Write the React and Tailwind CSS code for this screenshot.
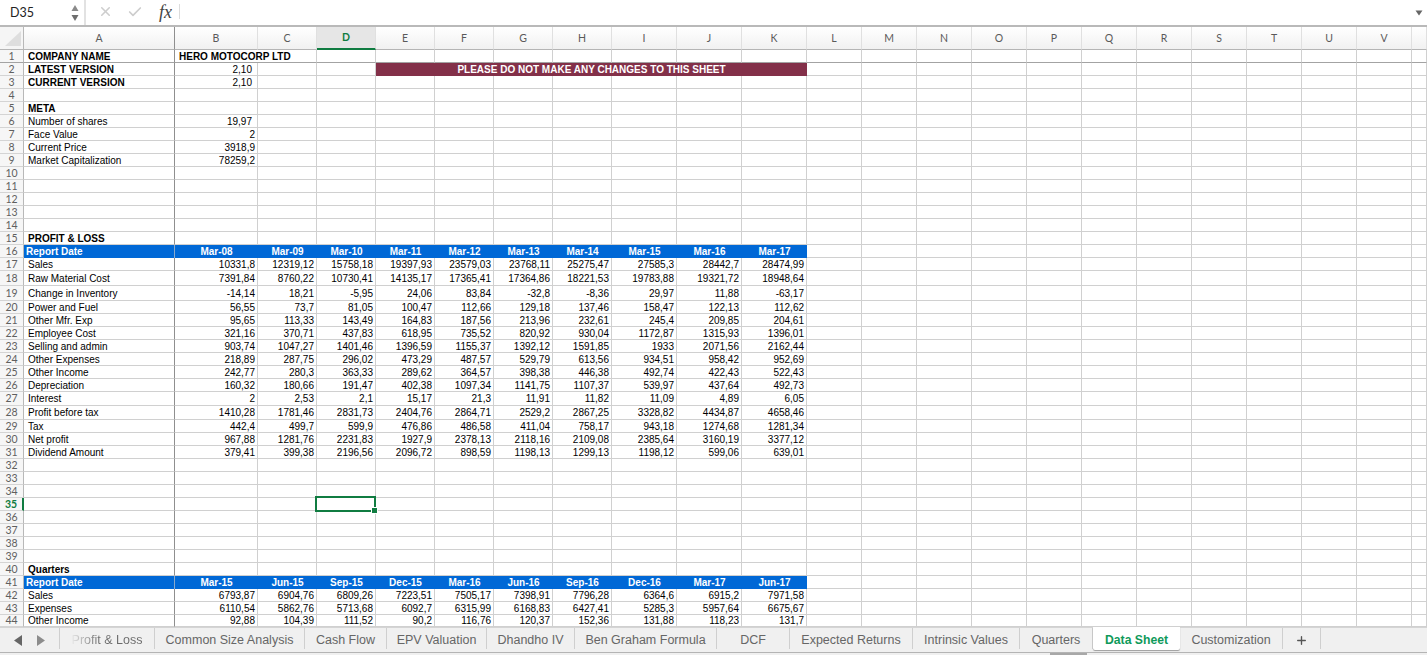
import React from "react";
import { X, Check, Plus } from "lucide-react";

const COLS =
  "grid grid-cols-[24px_151px_83px_59px_59px_59px_59px_59px_59px_65px_65px_65px_55px_55px_55px_55px_55px_55px_55px_55px_55px_55px_55px_15px]";

const LETTERS = ["A", "B", "C", "D", "E", "F", "G", "H", "I", "J", "K", "L", "M", "N", "O", "P", "Q", "R", "S", "T", "U", "V", ""];

const HEIGHTS = {
  18: "h-[15px]",
  19: "h-[15px]",
  27: "h-[14px]",
  28: "h-[14px]",
  44: "h-[12px]",
};

const TOTAL_ROWS = 44;

const FY = ["Mar-08", "Mar-09", "Mar-10", "Mar-11", "Mar-12", "Mar-13", "Mar-14", "Mar-15", "Mar-16", "Mar-17"];
const QTR = ["Mar-15", "Jun-15", "Sep-15", "Dec-15", "Mar-16", "Jun-16", "Sep-16", "Dec-16", "Mar-17", "Jun-17"];

const DATA = {
  17: ["Sales", "10331,8", "12319,12", "15758,18", "19397,93", "23579,03", "23768,11", "25275,47", "27585,3", "28442,7", "28474,99"],
  18: ["Raw Material Cost", "7391,84", "8760,22", "10730,41", "14135,17", "17365,41", "17364,86", "18221,53", "19783,88", "19321,72", "18948,64"],
  19: ["Change in Inventory", "-14,14", "18,21", "-5,95", "24,06", "83,84", "-32,8", "-8,36", "29,97", "11,88", "-63,17"],
  20: ["Power and Fuel", "56,55", "73,7", "81,05", "100,47", "112,66", "129,18", "137,46", "158,47", "122,13", "112,62"],
  21: ["Other Mfr. Exp", "95,65", "113,33", "143,49", "164,83", "187,56", "213,96", "232,61", "245,4", "209,85", "204,61"],
  22: ["Employee Cost", "321,16", "370,71", "437,83", "618,95", "735,52", "820,92", "930,04", "1172,87", "1315,93", "1396,01"],
  23: ["Selling and admin", "903,74", "1047,27", "1401,46", "1396,59", "1155,37", "1392,12", "1591,85", "1933", "2071,56", "2162,44"],
  24: ["Other Expenses", "218,89", "287,75", "296,02", "473,29", "487,57", "529,79", "613,56", "934,51", "958,42", "952,69"],
  25: ["Other Income", "242,77", "280,3", "363,33", "289,62", "364,57", "398,38", "446,38", "492,74", "422,43", "522,43"],
  26: ["Depreciation", "160,32", "180,66", "191,47", "402,38", "1097,34", "1141,75", "1107,37", "539,97", "437,64", "492,73"],
  27: ["Interest", "2", "2,53", "2,1", "15,17", "21,3", "11,91", "11,82", "11,09", "4,89", "6,05"],
  28: ["Profit before tax", "1410,28", "1781,46", "2831,73", "2404,76", "2864,71", "2529,2", "2867,25", "3328,82", "4434,87", "4658,46"],
  29: ["Tax", "442,4", "499,7", "599,9", "476,86", "486,58", "411,04", "758,17", "943,18", "1274,68", "1281,34"],
  30: ["Net profit", "967,88", "1281,76", "2231,83", "1927,9", "2378,13", "2118,16", "2109,08", "2385,64", "3160,19", "3377,12"],
  31: ["Dividend Amount", "379,41", "399,38", "2196,56", "2096,72", "898,59", "1198,13", "1299,13", "1198,12", "599,06", "639,01"],
  42: ["Sales", "6793,87", "6904,76", "6809,26", "7223,51", "7505,17", "7398,91", "7796,28", "6364,6", "6915,2", "7971,58"],
  43: ["Expenses", "6110,54", "5862,76", "5713,68", "6092,7", "6315,99", "6168,83", "6427,41", "5285,3", "5957,64", "6675,67"],
  44: ["Other Income", "92,88", "104,39", "111,52", "90,2", "116,76", "120,37", "152,36", "131,88", "118,23", "131,7"],
  6: ["Number of shares", "19,97"],
  7: ["Face Value", "2"],
  8: ["Current Price", "3918,9"],
  9: ["Market Capitalization", "78259,2"],
};

const BOLD_LABELS = {
  1: "COMPANY NAME",
  2: "LATEST VERSION",
  3: "CURRENT VERSION",
  5: "META",
  15: "PROFIT & LOSS",
  40: "Quarters",
};

const TABS = [
  ["Common Size Analysis", "w-[150px]"],
  ["Cash Flow", "w-[82px]"],
  ["EPV Valuation", "w-[100px]"],
  ["Dhandho IV", "w-[88px]"],
  ["Ben Graham Formula", "w-[142px]"],
  ["DCF", "w-[73px]"],
  ["Expected Returns", "w-[123px]"],
  ["Intrinsic Values", "w-[107px]"],
  ["Quarters", "w-[73px]"],
];

function RowNum({ n }) {
  const active = n === 35;
  return (
    <div
      className={`flex items-center justify-center bg-[#f6f6f6] text-[10.5px] font-['Lato',sans-serif] border-b ${
        n === 1 ? "border-b-[#a3a3a3]" : "border-b-[#d4d4d4]"
      } ${
        active
          ? "font-bold text-[#107c41] border-r-2 border-r-[#107c41]"
          : "text-[#5f5f5f] border-r border-r-[#b8b8b8]"
      }`}
    >
      {n}
    </div>
  );
}

function Cell({ n, col, children, align, noRight }) {
  const bottom = n === 1 ? "border-b-[#a3a3a3]" : "border-b-[#d0d0d0]";
  const right = noRight ? "" : col === 0 ? "border-r border-r-[#8f8f8f]" : "border-r border-r-[#d0d0d0]";
  return (
    <div
      className={`relative flex items-center whitespace-nowrap border-b pt-px ${bottom} ${right} ${
        align === "right" ? "justify-end pr-[2px]" : "pl-[4px]"
      }`}
    >
      {children}
    </div>
  );
}

function BlueRow({ n, labels }) {
  return (
    <>
      <div className="-mt-px flex items-center bg-[#0068d6] pl-[2px] pt-px font-bold text-white border-r border-r-[#8aa9cc]">Report Date</div>
      {labels.map((l) => (
        <div key={l} className="-mt-px flex items-center justify-center bg-[#0068d6] pt-px font-bold text-white">
          {l}
        </div>
      ))}
      {Array.from({ length: 12 }).map((_, i) => (
        <Cell key={i} n={n} col={i + 11} />
      ))}
    </>
  );
}

function SheetRow({ n }) {
  const height = HEIGHTS[n] || "h-[13px]";
  let cells;

  if (n === 16 || n === 41) {
    cells = <BlueRow n={n} labels={n === 16 ? FY : QTR} />;
  } else if (n === 2) {
    cells = (
      <>
        <Cell n={n} col={0}><span className="font-bold">LATEST VERSION</span></Cell>
        <Cell n={n} col={1} align="right"><span className="pr-[3px]">2,10</span></Cell>
        <Cell n={n} col={2} />
        <Cell n={n} col={3} />
        <div className="col-span-7 -mt-px flex items-center justify-center bg-[#833049] pt-px text-white font-bold">
          PLEASE DO NOT MAKE ANY CHANGES TO THIS SHEET
        </div>
        {Array.from({ length: 12 }).map((_, i) => (
          <Cell key={i} n={n} col={i + 11} />
        ))}
      </>
    );
  } else {
    const row = DATA[n] || [];
    cells = LETTERS.map((_, i) => {
      if (i === 0) {
        return (
          <Cell key={i} n={n} col={0}>
            {BOLD_LABELS[n] ? <span className="font-bold">{BOLD_LABELS[n]}</span> : row[0]}
          </Cell>
        );
      }
      if (n === 1 && i === 1) {
        return (
          <Cell key={i} n={n} col={1} noRight>
            <span className="font-bold">HERO MOTOCORP LTD</span>
          </Cell>
        );
      }
      if ((n === 3 || n === 6) && i === 1) {
        return (
          <Cell key={i} n={n} col={1} align="right">
            <span className="pr-[3px]">{n === 3 ? "2,10" : row[1]}</span>
          </Cell>
        );
      }
      return (
        <Cell key={i} n={n} col={i} align={row[i] ? "right" : undefined}>
          {row[i]}
          {n === 35 && i === 3 && (
            <div className="absolute left-[-2px] right-[-1px] top-[-2px] bottom-[-2px] z-10 border-2 border-[#107c41]">
              <div className="absolute right-[-4px] bottom-[-4px] h-[7px] w-[7px] border border-white bg-[#107c41]" />
            </div>
          )}
        </Cell>
      );
    });
  }

  return (
    <div className={`${COLS} ${height}`}>
      <RowNum n={n} />
      {cells}
    </div>
  );
}

function FormulaBar() {
  return (
    <div className="flex h-[27px] items-stretch border-b-2 border-b-[#b9b9b9] bg-white">
      <div className="flex w-[86px] items-center justify-between border-r-2 border-r-[#e2e2e2] pl-[10px] pr-[4px]">
        <span className="pt-[2px] font-['Lato',sans-serif] text-[12.5px] text-[#222]">D35</span>
        <svg width="8" height="18" viewBox="0 0 8 18" className="mr-[1px]">
          <path d="M4 1 L7.5 7 L0.5 7 Z" fill="#8a8a8a" />
          <path d="M4 17 L7.5 11 L0.5 11 Z" fill="#6e6e6e" />
        </svg>
      </div>
      <div className="flex items-center pb-[2px]">
        <X size={15} strokeWidth={2.5} color="#cdcdcd" className="ml-[12px]" />
        <Check size={16} strokeWidth={2.5} color="#cdcdcd" className="ml-[14px]" />
        <span className="ml-[16px] font-['Liberation_Serif',serif] text-[18px] italic text-[#444]">fx</span>
        <div className="ml-[7px] h-[15px] w-px bg-[#dcdcdc]" />
      </div>
      <div className="ml-auto flex items-center pr-[3px]">
        <svg width="8" height="6" viewBox="0 0 8 6" className="mr-[1px]">
          <path d="M0.5 0.5 L7.5 0.5 L4 5.5 Z" fill="#666" />
        </svg>
      </div>
    </div>
  );
}

function ColumnHeader() {
  return (
    <div className={`${COLS} h-[23px]`}>
      <div className="flex items-end justify-end border-r border-r-[#b8b8b8] border-b border-b-[#b5b5b5] bg-[#f5f5f5] pb-[3px] pr-[2px]">
        <svg width="16" height="15" viewBox="0 0 16 15">
          <path d="M16 0 L16 15 L0 15 Z" fill="#dedede" />
        </svg>
      </div>
      {LETTERS.map((l, i) => (
        <div
          key={i}
          className={`flex items-center justify-center font-['Lato',sans-serif] text-[10.5px] ${
            l === "D"
              ? "border-b-2 border-b-[#107c41] bg-[#e6e6e6] font-bold text-[#107c41]"
              : "border-b border-b-[#b5b5b5] bg-gradient-to-b from-white to-[#f1f1f1] text-[#5a5a5a]"
          } border-r ${l === "A" ? "border-r-[#8f8f8f]" : "border-r-[#e0e0e0]"}`}
        >
          {l}
        </div>
      ))}
    </div>
  );
}

function TabBar() {
  return (
    <div className="flex h-[26px] items-start border-t border-t-[#d4d4d4] border-b border-b-[#b4b4b4] bg-[#f0f0f0] font-['Liberation_Sans',sans-serif] text-[12.5px] text-[#666]">
      <div className="flex h-[21px] w-[60px] items-center border-r border-r-[#cfcfcf] pl-[14px] pt-[3px]">
        <svg width="8" height="11" viewBox="0 0 8 11">
          <path d="M8 0 L8 11 L0 5.5 Z" fill="#666" />
        </svg>
        <svg width="8" height="11" viewBox="0 0 8 11" className="ml-[15px]">
          <path d="M0 0 L0 11 L8 5.5 Z" fill="#8c8c8c" />
        </svg>
      </div>
      <div className="flex h-[21px] w-[95px] items-center justify-center border-r border-r-[#cfcfcf] pt-[3px]">
        <span className="bg-gradient-to-r from-[#e6e6e6] to-[#6a6a6a] to-[40%] bg-clip-text text-transparent">Profit &amp; Loss</span>
      </div>
      {TABS.map(([name, w]) => (
        <div key={name} className={`flex h-[21px] items-center justify-center border-r border-r-[#cfcfcf] pt-[3px] ${w}`}>
          {name}
        </div>
      ))}
      <div className="-mt-px flex h-[23px] w-[87px] items-center justify-center rounded-b-[2px] bg-white pt-[4px] text-[12.2px] font-bold text-[#0f9a5a] shadow-[0_1px_1px_rgba(0,0,0,0.35)]">
        Data Sheet
      </div>
      <div className="flex h-[21px] w-[103px] items-center justify-center border-r border-r-[#cfcfcf] pt-[3px]">Customization</div>
      <div className="flex h-[21px] w-[38px] items-center justify-center border-r border-r-[#cfcfcf] pt-[3px]">
        <Plus size={13} strokeWidth={2.5} color="#555" />
      </div>
    </div>
  );
}

export default function App() {
  const rows = Array.from({ length: TOTAL_ROWS }, (_, i) => i + 1);
  return (
    <div className="flex h-[655px] w-[1427px] flex-col overflow-hidden bg-white font-['Liberation_Sans',sans-serif] text-[10px] leading-none text-black">
      <FormulaBar />
      <ColumnHeader />
      <div>
        {rows.map((n) => (
          <SheetRow key={n} n={n} />
        ))}
      </div>
      <TabBar />
      <div className="h-[2px] bg-[#f0f0f0]">
        <div className="ml-[1050px] h-full w-[37px] bg-[#a8a8a8]" />
      </div>
    </div>
  );
}
